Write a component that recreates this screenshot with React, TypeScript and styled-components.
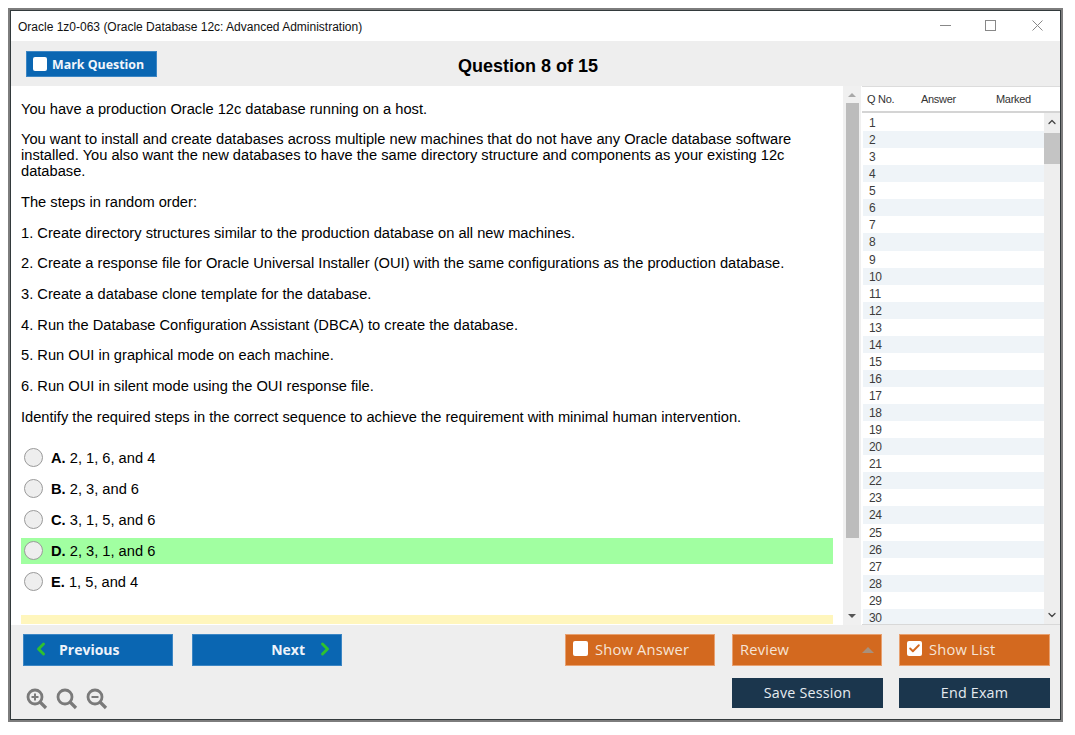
import styled, { createGlobalStyle } from 'styled-components'
import { Check, ChevronLeft, ChevronRight, ChevronUp, ChevronDown } from 'lucide-react'

const GlobalStyle = createGlobalStyle`
  html, body {
    margin: 0;
    padding: 0;
    background: #ffffff;
  }
  * {
    box-sizing: border-box;
  }
`;

// --- Window frame ---

const Page = styled.div`
  width: 1075px;
  height: 735px;
  padding: 8px 12px 13px 8px;
  overflow: hidden;
`;

const Frame = styled.div`
  height: 100%;
  border: 2px solid #7d7d7d;
`;

const Window = styled.div`
  height: 100%;
  border: 1px solid #333a3c;
  display: flex;
  flex-direction: column;
  font-family: "Liberation Sans", Arial, sans-serif;
  background: #ffffff;
`;

const TitleBar = styled.div`
  height: 30px;
  flex: none;
  display: flex;
  align-items: center;
  justify-content: space-between;
  padding-left: 7px;
  font-size: 12px;
  color: #111111;
`;

const TitleText = styled.span`
  margin-top: 2px;
`;

const WindowControls = styled.div`
  display: flex;
  align-items: center;
  padding-right: 17px;
  margin-bottom: 2px;
  color: #888888;
`;

const ControlIcon = styled.svg<{ $gap?: number }>`
  width: 11px;
  height: 11px;
  fill: none;
  stroke: currentColor;
  margin-right: ${(p) => p.$gap ?? 0}px;
`;

const Toolbar = styled.div`
  height: 45px;
  flex: none;
  background: #eeeeee;
  display: grid;
  grid-template-columns: 432px auto;
  padding: 10px 0 0 15px;
`;

const MarkButton = styled.button`
  justify-self: start;
  width: 131px;
  height: 26px;
  padding: 0 0 0 6px;
  display: flex;
  align-items: center;
  gap: 5px;
  background: #0a66b2;
  border: 1px solid #3c86c4;
  color: #f2f6fb;
  font-family: "Open Sans", sans-serif;
  font-size: 12.4px;
  font-weight: 700;
`;

const QuestionTitle = styled.h1`
  margin: 3px 0 0;
  font-size: 18px;
  line-height: 24px;
  font-weight: 700;
  color: #000000;
`;

// --- Body ---

const Body = styled.div`
  height: 539px;
  flex: none;
  display: flex;
`;

const QuestionPane = styled.div`
  width: 832px;
  flex: none;
  overflow: hidden;
  padding: 14.6px 10px 0 10px;
  border-bottom: 1px solid #ffffff;
`;

const Paragraph = styled.p`
  margin: 0 0 14.67px;
  font-size: 14.67px;
  line-height: 16px;
  color: #000000;
`;

const Options = styled.div`
  margin-top: 20px;
  display: flex;
  flex-direction: column;
  gap: 5px;
`;

const OptionRow = styled.div<{ $active?: boolean }>`
  height: 26px;
  display: flex;
  align-items: center;
  gap: 8px;
  padding-left: 3px;
  font-size: 14.67px;
  color: #000000;
  background: ${(p) => (p.$active ? '#a1ffa1' : 'transparent')};
`;

const Radio = styled.span`
  width: 19px;
  height: 19px;
  border-radius: 50%;
  border: 1px solid #9a9a9a;
  background: #eeeeee;
`;

const Explanation = styled.div`
  margin-top: 20px;
  height: 40px;
  background: #fff6bd;
`;

const PaneScroll = styled.div`
  width: 18px;
  flex: none;
  background: #f0f0f0;
  display: flex;
  flex-direction: column;
  align-items: center;
  padding: 7px 0 7px;
`;

const ArrowUp = styled.div<{ $color: string }>`
  width: 0;
  height: 0;
  border-left: 4px solid transparent;
  border-right: 4px solid transparent;
  border-bottom: 4px solid ${(p) => p.$color};
`;

const ArrowDown = styled.div`
  width: 0;
  height: 0;
  border-left: 4px solid transparent;
  border-right: 4px solid transparent;
  border-top: 4px solid #555555;
`;

const PaneThumb = styled.div`
  width: 13px;
  height: 435px;
  margin-top: 6px;
  background: #bcbcbc;
`;

const PaneTrack = styled.div`
  flex: 1;
`;

// --- Question list ---

const ListPanel = styled.div`
  flex: 1;
  min-width: 0;
  margin-left: 1px;
  display: flex;
  flex-direction: column;
  overflow: hidden;
  border-top: 1px solid #dcdcdc;
  border-bottom: 1px solid #d8d8d8;
`;

const ListHeader = styled.div`
  height: 26px;
  flex: none;
  display: grid;
  grid-template-columns: 54px 75px 1fr;
  align-items: center;
  padding-left: 5px;
  font-size: 11px;
  letter-spacing: -0.3px;
  color: #333333;
  border-bottom: 2px solid #d4d4d4;
  background: #ffffff;
`;

const ListBody = styled.div`
  flex: 1;
  display: flex;
  min-height: 0;
`;

const Rows = styled.div`
  flex: 1;
  padding: 1px 0 0 1px;
  overflow: hidden;
`;

const Row = styled.div<{ $even: boolean }>`
  height: 17.07px;
  line-height: 18px;
  padding-left: 6px;
  font-size: 12px;
  letter-spacing: -0.4px;
  color: #3c3c3c;
  overflow: hidden;
  background: ${(p) => (p.$even ? '#eff4f8' : '#ffffff')};
`;

const ListScroll = styled.div`
  width: 16px;
  flex: none;
  background: #eeeeee;
  display: flex;
  flex-direction: column;
  align-items: center;
  color: #444444;
`;

const ListThumb = styled.div`
  width: 100%;
  height: 31px;
  margin-top: 2px;
  background: #c4c4c4;
`;

const ArrowSlot = styled.div<{ $top?: boolean }>`
  height: 18px;
  display: flex;
  align-items: center;
  justify-content: center;
  margin-top: ${(p) => (p.$top ? '0' : 'auto')};
`;

// --- Footer ---

const Footer = styled.div`
  flex: 1;
  background: #eeeeee;
  display: grid;
  grid-template-columns: 1fr 150px 150px 151px;
  grid-template-rows: 32px 30px;
  column-gap: 17px;
  row-gap: 12px;
  padding: 9px 10px 0 12px;
`;

const NavGroup = styled.div`
  display: flex;
  gap: 19px;
`;

const NavButton = styled.button<{ $next?: boolean }>`
  width: 150px;
  display: flex;
  align-items: center;
  justify-content: ${(p) => (p.$next ? 'flex-end' : 'flex-start')};
  gap: ${(p) => (p.$next ? '10px' : '8px')};
  padding: ${(p) => (p.$next ? '0 6px 2px 0' : '0 0 2px 7px')};
  background: #0a66b2;
  border: 1px solid #3c86c4;
  color: #eef3fa;
  font-family: "Open Sans", sans-serif;
  font-size: 14px;
  font-weight: 700;
`;

const OrangeButton = styled.button`
  display: flex;
  align-items: center;
  gap: 7px;
  padding: 0 7px 3px;
  background: #d3691f;
  border: 1px solid #e8a06f;
  color: #f6e4d6;
  font-family: "Open Sans", sans-serif;
  font-size: 14.7px;
  letter-spacing: 0.2px;
`;

const DarkButton = styled.button`
  width: 151px;
  padding: 0 0 2px;
  background: #1b364d;
  border: none;
  color: #e6ebf0;
  font-family: "Open Sans", sans-serif;
  font-size: 14.3px;
  letter-spacing: 0.2px;
`;

const Box = styled.span<{ $size: number }>`
  width: ${(p) => p.$size}px;
  height: ${(p) => p.$size}px;
  flex: none;
  display: flex;
  align-items: center;
  justify-content: center;
  background: #ffffff;
  border-radius: 2px;
  color: #d3691f;
`;

const ReviewArrow = styled.span`
  margin-left: auto;
  margin-top: 3px;
  width: 0;
  height: 0;
  border-left: 6px solid transparent;
  border-right: 6px solid transparent;
  border-bottom: 6px solid #a8907c;
`;

const ZoomGroup = styled.div`
  display: flex;
  gap: 8px;
  align-items: flex-start;
  padding: 10px 0 0 3px;
  color: #7a7a7a;
`;

const Spacer = styled.div`
  grid-column: 2;
`;

function ZoomIcon({ mark }: { mark?: 'plus' | 'minus' }) {
  return (
    <svg width="22" height="22" viewBox="0 0 22 22" fill="none" stroke="currentColor">
      <circle cx="9" cy="9" r="7" strokeWidth="2.8" />
      <path d="M14 14l6 6" strokeWidth="3.2" />
      {mark && <path d="M5.5 9h7" strokeWidth="2" />}
      {mark === 'plus' && <path d="M9 5.5v7" strokeWidth="2" />}
    </svg>
  )
}

const paragraphs = [
  'You have a production Oracle 12c database running on a host.',
  'You want to install and create databases across multiple new machines that do not have any Oracle database software installed. You also want the new databases to have the same directory structure and components as your existing 12c database.',
  'The steps in random order:',
  '1. Create directory structures similar to the production database on all new machines.',
  '2. Create a response file for Oracle Universal Installer (OUI) with the same configurations as the production database.',
  '3. Create a database clone template for the database.',
  '4. Run the Database Configuration Assistant (DBCA) to create the database.',
  '5. Run OUI in graphical mode on each machine.',
  '6. Run OUI in silent mode using the OUI response file.',
  'Identify the required steps in the correct sequence to achieve the requirement with minimal human intervention.',
]

const options = [
  { letter: 'A.', text: '2, 1, 6, and 4' },
  { letter: 'B.', text: '2, 3, and 6' },
  { letter: 'C.', text: '3, 1, 5, and 6' },
  { letter: 'D.', text: '2, 3, 1, and 6', correct: true },
  { letter: 'E.', text: '1, 5, and 4' },
]

const rows = Array.from({ length: 30 }, (_, i) => i + 1)

function App() {
  return (
    <Page>
      <GlobalStyle />
      <Frame>
        <Window>
          <TitleBar>
            <TitleText>Oracle 1z0-063 (Oracle Database 12c: Advanced Administration)</TitleText>
            <WindowControls>
              <ControlIcon viewBox="0 0 11 11" $gap={34}>
                <path d="M0 5.5h11" />
              </ControlIcon>
              <ControlIcon viewBox="0 0 11 11" $gap={36}>
                <rect x="0.5" y="0.5" width="10" height="10" />
              </ControlIcon>
              <ControlIcon viewBox="0 0 11 11">
                <path d="M0.5 0.5l10 10M10.5 0.5l-10 10" />
              </ControlIcon>
            </WindowControls>
          </TitleBar>

          <Toolbar>
            <MarkButton>
              <Box $size={14} />
              Mark Question
            </MarkButton>
            <QuestionTitle>Question 8 of 15</QuestionTitle>
          </Toolbar>

          <Body>
            <QuestionPane>
              {paragraphs.map((text) => (
                <Paragraph key={text}>{text}</Paragraph>
              ))}
              <Options>
                {options.map((o) => (
                  <OptionRow key={o.letter} $active={o.correct}>
                    <Radio />
                    <span>
                      <b>{o.letter}</b> {o.text}
                    </span>
                  </OptionRow>
                ))}
              </Options>
              <Explanation />
            </QuestionPane>
            <PaneScroll>
              <ArrowUp $color="#a8a8a8" />
              <PaneThumb />
              <PaneTrack />
              <ArrowDown />
            </PaneScroll>
            <ListPanel>
              <ListHeader>
                <span>Q No.</span>
                <span>Answer</span>
                <span>Marked</span>
              </ListHeader>
              <ListBody>
                <Rows>
                  {rows.map((n) => (
                    <Row key={n} $even={n % 2 === 0}>{n}</Row>
                  ))}
                </Rows>
                <ListScroll>
                  <ArrowSlot $top>
                    <ChevronUp size={12} strokeWidth={2.5} />
                  </ArrowSlot>
                  <ListThumb />
                  <ArrowSlot>
                    <ChevronDown size={12} strokeWidth={2.5} />
                  </ArrowSlot>
                </ListScroll>
              </ListBody>
            </ListPanel>
          </Body>

          <Footer>
            <NavGroup>
              <NavButton>
                <ChevronLeft size={20} strokeWidth={3.5} color="#2fc12f" />
                Previous
              </NavButton>
              <NavButton $next>
                Next
                <ChevronRight size={20} strokeWidth={3.5} color="#2fc12f" />
              </NavButton>
            </NavGroup>
            <OrangeButton>
              <Box $size={15} />
              Show Answer
            </OrangeButton>
            <OrangeButton>
              Review
              <ReviewArrow />
            </OrangeButton>
            <OrangeButton>
              <Box $size={15}>
                <Check size={13} strokeWidth={3.5} />
              </Box>
              Show List
            </OrangeButton>

            <ZoomGroup>
              <ZoomIcon mark="plus" />
              <ZoomIcon />
              <ZoomIcon mark="minus" />
            </ZoomGroup>
            <Spacer />
            <DarkButton>Save Session</DarkButton>
            <DarkButton>End Exam</DarkButton>
          </Footer>
        </Window>
      </Frame>
    </Page>
  )
}

export default App
